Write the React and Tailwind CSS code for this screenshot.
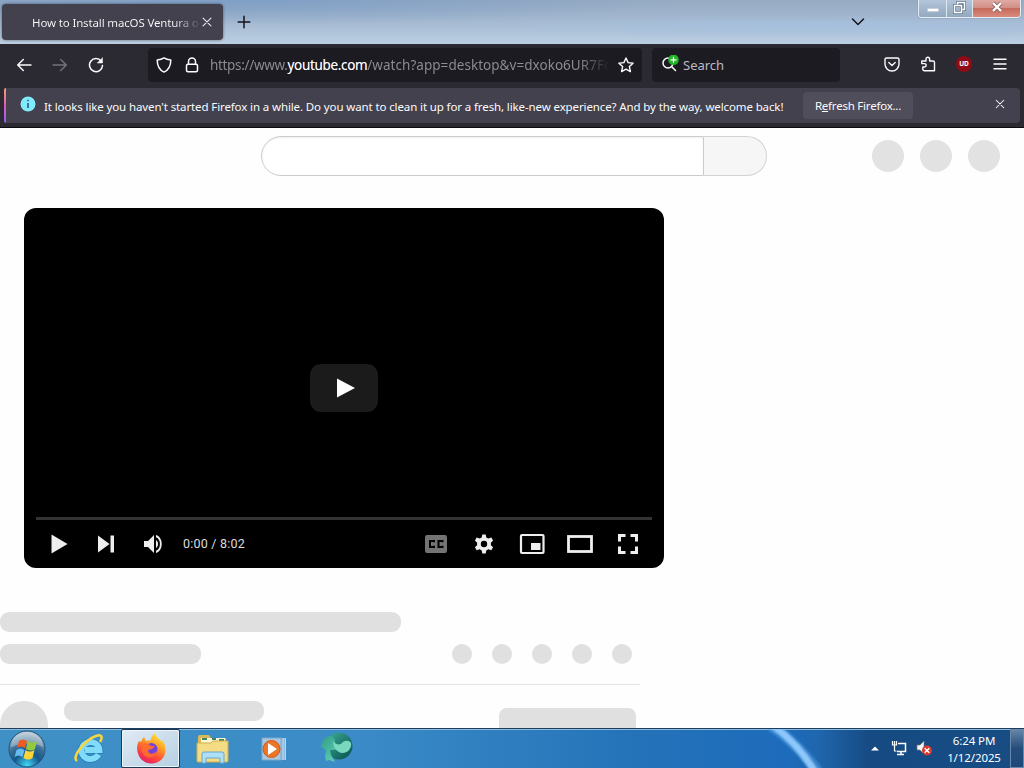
import React from "react";

const line = { fill: "none", stroke: "currentColor", strokeLinecap: "round", strokeLinejoin: "round" };

function Icon({ size = 16, sw = 1.4, className = "", box = 16, children }) {
  return (
    <svg width={size} height={size} viewBox={`0 0 ${box} ${box}`} {...line} strokeWidth={sw} className={`shrink-0 ${className}`}>
      {children}
    </svg>
  );
}

function TabStrip() {
  return (
    <header className="flex h-[44px] shrink-0 items-start bg-[radial-gradient(ellipse_at_22%_0%,#7f9fc6_0%,transparent_40%),radial-gradient(ellipse_at_80%_60%,#a6c0de_0%,transparent_30%),linear-gradient(180deg,#96aac2_0%,#a3b8d0_45%,#bccfe3_100%)]">
      <div className="mt-[4px] ml-[2px] flex h-[36px] w-[221px] items-center rounded-[4px] bg-[#42414d] pl-[30px] shadow-[0_0_3px_rgba(0,0,0,0.5)]">
        <div className="w-[168px] overflow-hidden whitespace-nowrap bg-[linear-gradient(90deg,#fbfbfe_0%,#fbfbfe_84%,transparent_101%)] bg-clip-text pt-[1px] text-[11.5px] tracking-[-0.14px] text-transparent">
          How to Install macOS Ventura o
        </div>
        <Icon size={14} sw={1.3} className="text-[#e8e8ee]"><path d="M3.5 3.5l9 9M12.5 3.5l-9 9" /></Icon>
      </div>
      <Icon size={16} sw={1.5} className="mt-[14px] ml-[13px] text-[#15141a]"><path d="M8 2.2v11.6M2.2 8h11.6" /></Icon>
      <div className="grow" />
      <Icon size={16} sw={1.5} className="mt-[13px] mr-[52px] text-[#15141a]"><path d="M2.500 6L8 11.500l5.500-5.500" /></Icon>
      <div className="mr-[3px] flex h-[18px] w-[103px] overflow-hidden rounded-b-[4px] border border-t-0 border-[#e4edf5] shadow-[0_0_1px_#46566a]">
        <div className="flex w-[28px] items-end justify-center border-r border-[#dfe7ef] bg-gradient-to-b from-[#b3c5d9] to-[#92a9bf] pb-[5px]">
          <div className="h-[4px] w-[12px] rounded-[1px] border border-[#c3ced9] bg-white" />
        </div>
        <div className="flex w-[26px] items-center justify-center border-r border-[#dfe7ef] bg-gradient-to-b from-[#b3c5d9] to-[#92a9bf] pb-[2px]">
          <svg width="13" height="13" viewBox="0 0 13 13" fill="none">
            <path d="M4.500 3.500V1.500h7v7h-2M1.500 4.500h7v7h-7z" stroke="#63738a" strokeWidth="3" />
            <path d="M4.500 3.500V1.500h7v7h-2M1.500 4.500h7v7h-7z" stroke="#fff" strokeWidth="1.500" />
          </svg>
        </div>
        <div className="flex grow items-center justify-center bg-[linear-gradient(180deg,#dfaaa3_0%,#d38f87_45%,#c66a5c_50%,#d98b7c_100%)] pb-[3px]">
          <svg width="14" height="12" viewBox="0 0 14 12">
            <path d="M3 2l8 8M11 2l-8 8" stroke="#8f6467" strokeWidth="4" />
            <path d="M3 2l8 8M11 2l-8 8" stroke="#fff" strokeWidth="2.400" />
          </svg>
        </div>
      </div>
    </header>
  );
}

function NavBar() {
  return (
    <nav className="flex h-[44px] shrink-0 items-center bg-[#2b2a33] pb-[2px] text-[#fbfbfe]">
      <Icon className="ml-[16px]"><path d="M15 8H1.700M7.300 2.400L1.700 8l5.600 5.600" /></Icon>
      <Icon className="ml-[20px] text-[#74737c]"><path d="M1 8h13.300M8.700 2.400L14.300 8l-5.600 5.600" /></Icon>
      <Icon className="ml-[20px]" sw={1.5}>
        <path d="M13.200 4.200A6.500 6.500 0 1 0 14.500 8.500" />
        <path d="M14.500 1v5h-5z" fill="currentColor" strokeWidth=".5" />
      </Icon>
      <div className="ml-[44px] flex h-[34px] w-[494px] items-center rounded-[4px] bg-[#1c1b22]">
        <Icon className="ml-[8px]" sw={1.5}><path d="M8 .9c2 1.300 4.300 1.900 6.800 2.200 0 5.600-1.400 9.700-6.800 12C2.600 12.800 1.200 8.700 1.200 3.100 3.700 2.800 6 2.200 8 .9z" /></Icon>
        <Icon className="ml-[12px]" sw={1.5}><rect x="2.500" y="7.200" width="11" height="7.600" rx="1.500" /><path d="M4.500 7V4.400a3.500 3.500 0 0 1 7 0V7" /></Icon>
        <div className="ml-[10px] w-[400px] overflow-hidden whitespace-nowrap bg-[linear-gradient(90deg,#8f8e96_0%,#8f8e96_92%,transparent_100%)] bg-clip-text text-[13.500px] tracking-[0.04px] text-transparent">
          <span className="tracking-[-0.33px]">https://www.<span className="text-[#fbfbfe]">youtube.com</span></span>/watch?app=desktop&amp;v=dxoko6UR7Fc
        </div>
        <Icon className="ml-[8px]"><path d="M8 1l2.100 4.600 5 .6-3.700 3.400 1 5L8 12.100l-4.400 2.500 1-5L.900 6.200l5-.6z" /></Icon>
      </div>
      <div className="ml-[10px] flex h-[34px] w-[188px] items-center rounded-[4px] bg-[#1c1b22]">
        <svg width="20" height="20" viewBox="0 0 20 20" className="ml-[8px] shrink-0" fill="none">
          <circle cx="8" cy="8" r="5" stroke="#fbfbfe" strokeWidth="1.500" />
          <path d="M11.500 11.500l4 4" stroke="#fbfbfe" strokeWidth="1.500" strokeLinecap="round" />
          <circle cx="13.500" cy="4.800" r="5.300" fill="#22b526" />
          <path d="M13.500 1.800v6M10.500 4.800h6" stroke="#fff" strokeWidth="1.200" />
        </svg>
        <span className="ml-[3px] pt-[1px] text-[13px] text-[#bbbac2]">Search</span>
      </div>
      <Icon className="mb-[2px] ml-[44px]"><path d="M2.500 2h11A1.500 1.500 0 0 1 15 3.500V8A7 7 0 0 1 1 8V3.500A1.500 1.500 0 0 1 2.500 2zM4.800 6.500L8 9.500l3.200-3" /></Icon>
      <Icon className="mb-[2px] ml-[20px]"><path d="M6 5V3a1.800 1.800 0 0 1 3.600 0v2H13a1.500 1.500 0 0 1 1.500 1.500v8.300H4.300a1.500 1.500 0 0 1-1.500-1.500V11h1.700a1.700 1.700 0 0 0 0-3.400H1.800V5z" /></Icon>
      <div className="mb-[2px] ml-[20px] flex h-[16px] w-[16px] items-center justify-center rounded-full bg-[#8f0b17] text-[6.500px] font-bold leading-none text-white">UD</div>
      <Icon className="mb-[2px] ml-[20px]" sw={1.4}><path d="M2 3.200h12M2 8h12M2 12.800h12" /></Icon>
    </nav>
  );
}

function Notice() {
  return (
    <section className="h-[40px] shrink-0 border-b border-[#0c0c0d] bg-[#2b2a33] pr-[4px] pl-[4px]">
      <div className="flex h-[35px] items-center rounded-[4px] bg-[#42414d] text-[11.500px] text-[#fbfbfe]">
        <div className="h-full w-[2px] rounded-l-[2px] bg-gradient-to-b from-[#ff9a6b] via-[#e256b5] to-[#9059ff]" />
        <svg width="16" height="16" viewBox="0 0 16 16" className="mb-[3px] ml-[14px] shrink-0">
          <circle cx="8" cy="8" r="7.500" fill="#80ebff" />
          <path d="M8 7v5M8 3.700v1.500" stroke="#255c78" strokeWidth="1.600" />
        </svg>
        <div className="ml-[8px] w-[751px] shrink-0 pt-[3px] whitespace-nowrap tracking-[-0.115px]">
          It looks like you haven't started Firefox in a while. Do you want to clean it up for a fresh, like-new experience? And by the way, welcome back!
        </div>
        <button className="ml-[8px] h-[27px] w-[110px] shrink-0 rounded-[4px] bg-[#4f4e5a] whitespace-nowrap tracking-[-0.22px]">
          R<span className="underline">e</span>fresh Firefox...
        </button>
        <Icon size={12} sw={1.4} className="mb-[3px] ml-[81px]"><path d="M3 3l10 10M13 3L3 13" /></Icon>
      </div>
    </section>
  );
}

function Player() {
  return (
    <div className="mt-[32px] ml-[24px] flex h-[360px] w-[640px] shrink-0 flex-col rounded-[12px] bg-black px-[12px] text-[#eee]">
      <div className="flex h-[309px] items-end justify-center pb-[105px]">
        <div className="flex h-[48px] w-[68px] items-center justify-center rounded-[11px] bg-[#1b1b1b]">
          <svg width="68" height="48" viewBox="0 0 68 48"><path d="M27 14.500v19L45 24z" fill="#fff" /></svg>
        </div>
      </div>
      <div className="h-[3px] bg-[#333]" />
      <div className="flex h-[48px] items-center">
        <svg width="146" height="48" viewBox="0 0 146 48" fill="#eee" className="shrink-0">
          <path d="M15.500 14.500v19L31.500 24zM62 15.500v17l11.500-8.500zM74.500 15.500H78v17h-3.500zM108 21h4l6-6v18l-6-6h-4z" />
          <path d="M120 20c2.700 1.500 2.700 6.500 0 8zM120 15v2.200c5.300 1.800 5.300 11.800 0 13.600V33c7.700-2 7.700-16 0-18z" />
        </svg>
        <span className="ml-[1px] font-['Roboto',sans-serif] text-[12.500px] tracking-[0.22px] text-[#ddd]">0:00 / 8:02</span>
        <div className="grow" />
        <svg width="240" height="48" viewBox="0 0 240 48" className="shrink-0">
          <rect x="13" y="15" width="22" height="18" rx="2" fill="#737373" />
          <path d="M22 22.300v-1.300h-4v6h4v-1.300M30.500 22.300v-1.300h-4v6h4v-1.300" fill="none" stroke="#000" strokeWidth="2" />
          <g transform="translate(60 12.500)" fill="#eee">
            <path fillRule="evenodd" d="M10.300 2h3.400l.6 3 2 1.100 3-1 1.800 3-2.200 2.100v2.500l2.200 2.100-1.800 3-3-1-2 1.200-.6 3h-3.400l-.6-3-2-1.200-3 1-1.800-3 2.200-2.100v-2.500L2.900 8.100l1.800-3 3 1 2-1.100zM12 8.300a3.200 3.200 0 1 0 0 6.400 3.200 3.200 0 1 0 0-6.400z" />
          </g>
          <rect x="109" y="15" width="22.500" height="18" rx="1" fill="none" stroke="#eee" strokeWidth="2.200" />
          <path d="M119 23h9.500v7H119z" fill="#eee" />
          <rect x="156.500" y="16.500" width="23" height="15" fill="none" stroke="#eee" strokeWidth="2.800" />
          <path d="M207.500 21.500v-6h6M218.500 15.500h6v6M224.500 26.500v6h-6M213.500 32.500h-6v-6" fill="none" stroke="#eee" strokeWidth="3" />
        </svg>
      </div>
    </div>
  );
}

function Content() {
  return (
    <main className="flex h-[600px] shrink-0 flex-col overflow-hidden bg-[#fefefe]">
      <div className="flex h-[48px] shrink-0 items-center pt-[8px]">
        <div className="ml-[261px] h-[40px] w-[443px] rounded-l-full border border-[#ccc] bg-white shadow-[inset_0_1px_2px_#eee]" />
        <div className="h-[40px] w-[63px] rounded-r-full border border-l-0 border-[#d3d3d3] bg-[#f6f6f6]" />
        <div className="ml-[105px] flex gap-[16px]">
          {[0, 1, 2].map((i) => <div key={i} className="h-[32px] w-[32px] rounded-full bg-[#e2e2e2]" />)}
        </div>
      </div>
      <Player />
      <div className="mt-[44px] h-[20px] w-[401px] shrink-0 rounded-[9px] bg-[#e0e0e0]" />
      <div className="mt-[12px] flex h-[20px] w-[632px] shrink-0 items-center justify-between">
        <div className="h-[20px] w-[201px] rounded-[9px] bg-[#e0e0e0]" />
        <div className="flex gap-[20px]">
          {[0, 1, 2, 3, 4].map((i) => <div key={i} className="h-[20px] w-[20px] rounded-full bg-[#e0e0e0]" />)}
        </div>
      </div>
      <div className="mt-[20px] h-px w-[640px] shrink-0 bg-[#e5e5e5]" />
      <div className="mt-[16px] flex w-[640px] shrink-0 items-start">
        <div className="h-[48px] w-[48px] rounded-full bg-[#e0e0e0]" />
        <div className="ml-[16px] h-[20px] w-[200px] rounded-[9px] bg-[#e0e0e0]" />
        <div className="mt-[7px] ml-[235px] h-[36px] w-[137px] rounded-[8px] bg-[#e0e0e0]" />
      </div>
    </main>
  );
}

function StartOrb() {
  return (
    <svg width="40" height="38" viewBox="0 0 40 38" className="ml-[7px] shrink-0">
      <defs>
        <radialGradient id="orb" cx="50%" cy="95%" r="90%"><stop offset="0" stopColor="#42d8f7" /><stop offset=".4" stopColor="#14588a" /><stop offset=".65" stopColor="#3c6f96" /><stop offset="1" stopColor="#b4c4ce" /></radialGradient>
      </defs>
      <circle cx="20" cy="19" r="18" fill="url(#orb)" stroke="#20527c" />
      <path d="M4 17a16 15 0 0 1 32 0c-10-5-20-4-32 0z" fill="#d9e8ef" opacity=".35" />
      <path d="M12 11q4-3 8 0l-2 7q-4-3-8 0z" fill="#f05a20" />
      <path d="M21 11q4 3 9 0l-2 8q-4 3-9 0z" fill="#95c93b" />
      <path d="M9.500 20q4-3 8 0l-2 7q-4-3-8 0z" fill="#65baf0" />
      <path d="M18.500 20q4 3 9 0l-2 8q-4 3-9 0z" fill="#ffd43b" />
    </svg>
  );
}

function Taskbar() {
  return (
    <footer className="relative flex h-[40px] shrink-0 items-center overflow-hidden border-t border-[#1d3d61] bg-[linear-gradient(90deg,#3f91c5_0%,#3a8bc7_35%,#2473b9_62%,#1d6bbb_77%,#1f66ad_80%,#164a82_85%,#174d84_100%)] text-white shadow-[inset_0_1px_0_#8ebddc]">
      <svg width="80" height="39" viewBox="0 0 80 39" className="absolute top-0 left-[760px]">
        <defs><filter id="soft"><feGaussianBlur stdDeviation="1.3" /></filter></defs>
        <path d="M10-4C28 8 46 26 58 43" fill="none" stroke="#58a9ed" strokeWidth="11" opacity=".45" filter="url(#soft)" />
        <path d="M12-4C29 8 45 26 55 43" fill="none" stroke="#8ec8fa" strokeWidth="7" filter="url(#soft)" />
      </svg>
      <StartOrb />
      <svg width="32" height="32" viewBox="0 0 32 32" className="ml-[26px] shrink-0" fill="none">
        <path d="M25.500 21.500A9 8.500 0 1 1 26.500 17H12" stroke="#277fbb" strokeWidth="7.500" />
        <path d="M25.500 21.500A9 8.500 0 1 1 26.500 17H12" stroke="#80dcf9" strokeWidth="5.800" />
        <path d="M4 28C-2 24 12 7 23 3c6-2 7 1 4 6" stroke="#f7d442" strokeWidth="2.500" />
      </svg>
      <div className="ml-[16px] flex h-[39px] w-[59px] shrink-0 items-center justify-center rounded-[2px] border border-[#1c3854] bg-gradient-to-br from-[#e1ebf4] to-[#b5cfe2] shadow-[inset_0_0_0_1px_#eef5fa]">
        <svg width="32" height="32" viewBox="0 0 32 32">
          <defs>
            <linearGradient id="fox" x1=".8" y1="0" x2=".3" y2="1"><stop offset="0" stopColor="#fff238" /><stop offset=".4" stopColor="#ff9a24" /><stop offset=".7" stopColor="#ff4c39" /><stop offset="1" stopColor="#e51b67" /></linearGradient>
          </defs>
          <path d="M4 8l2 1c1-3 2-4 3-5l2 4c3-1 4 0 5-1 0-4 3-6 4-7 1 5 5 6 6 8l2 0c4 7 3 15-2 19-7 6-18 4-22-4C1 17 2 11 4 8z" fill="url(#fox)" />
          <circle cx="16.500" cy="16" r="6" fill="#7541db" />
          <path d="M8 11c3-1 6 0 8 2l4 0-3 3-4 1c0 4 4 5 8 2-1 6-8 7-12 3-3-3-3-7-1-11z" fill="#ff6a2f" />
        </svg>
      </div>
      <svg width="34" height="30" viewBox="0 0 34 30" className="ml-[16px] shrink-0">
        <path d="M2 3q0-2 2-2h9l2 3h15v8H2z" fill="#dcb958" />
        <path d="M5 4h24v8H5z" fill="#fff5ce" /><path d="M6 5h5M16 5h4M23 6h5" stroke="#3d8563" strokeWidth="2" />
        <path d="M1 9h14l2-2h15v20q0 1-1 1H2q-1 0-1-1z" fill="#f3dc83" stroke="#d2ae4c" />
        <path d="M6 29V20q0-2 2-2h18q2 0 2 2v9h-4v-5H10v5z" fill="#addff5" stroke="#64a9cf" />
      </svg>
      <svg width="27" height="28" viewBox="0 0 27 28" className="ml-[30px] shrink-0">
        <path d="M4 3h21v22H4z" fill="#8fbce0" /><path d="M2 3h19v22H2z" fill="#a9c7de" stroke="#7da6ca" /><path d="M23 3v22M25.500 3v22" stroke="#b9d7ee" />
        <circle cx="11.500" cy="14" r="8.500" fill="#ec7627" stroke="#d65610" /><path d="M8 8v12l9-6z" fill="#fff" />
      </svg>
      <svg width="34" height="32" viewBox="0 0 34 32" className="ml-[33px] mb-[1px] shrink-0">
        <defs>
          <linearGradient id="globe" x1="0" y1="0" x2="1" y2="1"><stop offset="0" stopColor="#3fae98" /><stop offset="1" stopColor="#064f4d" /></linearGradient>
          <linearGradient id="flow" x1="0" y1="0" x2=".6" y2="1"><stop offset="0" stopColor="#2f9c88" /><stop offset="1" stopColor="#5cc9b0" /></linearGradient>
        </defs>
        <circle cx="19" cy="14" r="13.500" fill="url(#globe)" />
        <path d="M1 15C2 6 9 2 13 5c3 3 1 8 5 12-3 1-6 1-8 1l1 5 4 7-6-2-3 1-1-4 1-7z" fill="url(#flow)" />
        <path d="M13 9c2 3 5 4 8 3 3-4 8-4 10-1 1 5-3 10-9 10-6-1-9-6-9-12z" fill="#79d9bf" />
      </svg>
      <div className="grow" />
      <svg width="8" height="5" viewBox="0 0 8 5" className="mr-[12px]"><path d="M0 4.500L4 .5l4 4z" fill="#fff" /></svg>
      <svg width="17" height="17" viewBox="0 0 17 17" fill="none" stroke="#fff" className="mr-[8px] shrink-0">
        <path d="M1.500 1v4h4V1M3.500 1v10h2" strokeWidth="1.200" /><path d="M7 3.500h7.500v8H6M10 12v2.500M6 14.500h7" strokeWidth="1.500" />
      </svg>
      <svg width="17" height="17" viewBox="0 0 17 17" className="mr-[13px] shrink-0">
        <path d="M1 5h3l4-4v13l-4-4H1z" fill="#f3f5f5" stroke="#777" strokeWidth=".7" />
        <circle cx="11" cy="10.500" r="5" fill="#d83a2f" /><path d="M8.700 8.200l4.600 4.600M13.300 8.200l-4.600 4.600" stroke="#fff" strokeWidth="1.500" />
      </svg>
      <div className="mr-[8px] w-[56px] shrink-0 text-center text-[11.500px] leading-[17px] tracking-[-0.1px] whitespace-nowrap"><div>6:24 PM</div><div>1/12/2025</div></div>
      <div className="h-[39px] w-[14px] shrink-0 border border-[#6c88a8] bg-gradient-to-b from-[#6684a5] via-[#254d7b] to-[#1f497a]" />
    </footer>
  );
}

export default function App() {
  return (
    <div className="flex h-[768px] w-[1024px] flex-col overflow-hidden font-['Noto_Sans','Liberation_Sans',sans-serif]">
      <TabStrip />
      <NavBar />
      <Notice />
      <Content />
      <Taskbar />
    </div>
  );
}
